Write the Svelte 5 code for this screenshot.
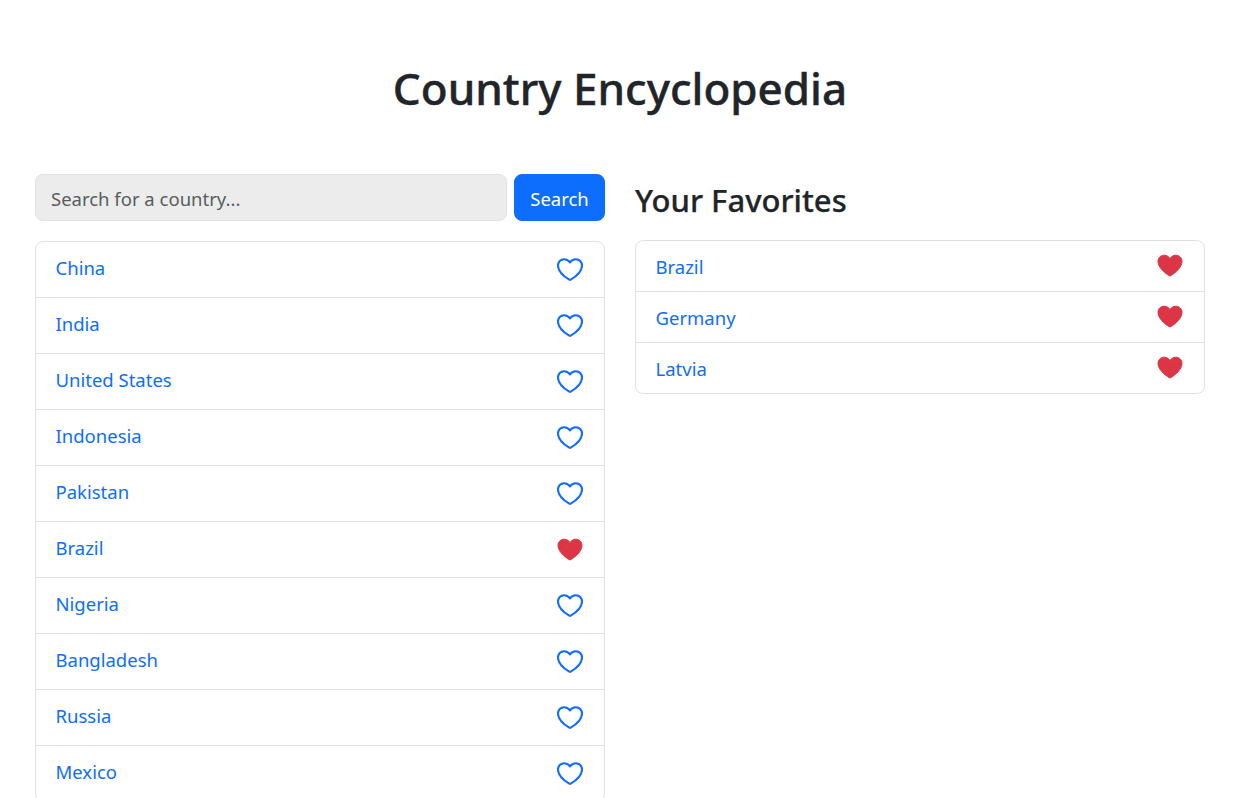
<script lang="ts">
	const countries = [
		{ name: 'China', favorite: false },
		{ name: 'India', favorite: false },
		{ name: 'United States', favorite: false },
		{ name: 'Indonesia', favorite: false },
		{ name: 'Pakistan', favorite: false },
		{ name: 'Brazil', favorite: true },
		{ name: 'Nigeria', favorite: false },
		{ name: 'Bangladesh', favorite: false },
		{ name: 'Russia', favorite: false },
		{ name: 'Mexico', favorite: false }
	];
	const favorites = ['Brazil', 'Germany', 'Latvia'];
</script>

{#snippet heart(filled: boolean)}
	<svg class={filled ? 'heart filled' : 'heart'} viewBox="0 0 26 23" aria-hidden="true">
		<path d="M13 4.500C11.600 2.400 9.600 1.200 7.200 1.200 3.600 1.200 1 4 1 7.500c0 5.500 6 11 11.300 14.200.5.300.9.300 1.400 0C19 18.500 25 13 25 7.500c0-3.500-2.600-6.300-6.200-6.300-2.400 0-4.400 1.200-5.800 3.300z" />
	</svg>
{/snippet}

<main class="page">
	<h1>Country Encyclopedia</h1>
	<div class="columns">
		<section>
			<form class="search">
				<input type="text" placeholder="Search for a country..." />
				<button type="button">Search</button>
			</form>
			<ul class="list">
				{#each countries as country}
					<li class="row">
						<a href="#top">{country.name}</a>
						{@render heart(country.favorite)}
					</li>
				{/each}
			</ul>
		</section>
		<section>
			<h2>Your Favorites</h2>
			<ul class="list compact">
				{#each favorites as name}
					<li class="row">
						<a href="#top">{name}</a>
						{@render heart(true)}
					</li>
				{/each}
			</ul>
		</section>
	</div>
</main>

<style>
	:global(html),
	:global(body) {
		overflow: hidden;
		height: 798px;
		background: #fff;
	}
	.page {
		width: 1170px;
		margin-left: 35px;
		font-family: 'Noto Sans', 'Open Sans', sans-serif;
		font-size: 18.5px;
		line-height: 1.5;
		color: #212529;
	}
	h1 {
		margin: 0;
		padding: 62px 0 59px;
		text-align: center;
		font-size: 44px;
		font-weight: 500;
		-webkit-text-stroke: 0.4px #212529;
		line-height: 1.2;
		height: 174px;
		box-sizing: border-box;
	}
	.columns {
		display: grid;
		grid-template-columns: 570px 570px;
		gap: 30px;
	}
	h2 {
		margin: 0;
		padding: 7px 0 12px;
		font-size: 31px;
		font-weight: 500;
		-webkit-text-stroke: 0.25px #212529;
		line-height: 1.25;
		height: 66px;
		box-sizing: border-box;
	}
	.search {
		display: flex;
		gap: 7px;
		margin-bottom: 20px;
	}
	input {
		flex: 1;
		min-width: 0;
		box-sizing: border-box;
		height: 47px;
		padding: 1px 15px 0;
		border: 1px solid #dee2e6;
		border-radius: 8px;
		background: #ececec;
		font: inherit;
		color: #212529;
	}
	input::placeholder {
		color: #595c5f;
		opacity: 1;
	}
	button {
		height: 47px;
		width: 91px;
		padding: 3px 0 0;
		border: 1px solid #0d6efd;
		border-radius: 8px;
		background: #0d6efd;
		color: #fff;
		font: inherit;
	}
	.list {
		margin: 0;
		padding: 0;
		list-style: none;
		border: 1px solid #dee2e6;
		border-radius: 8px;
	}
	.row {
		display: flex;
		align-items: center;
		justify-content: space-between;
		box-sizing: border-box;
		height: 56px;
		padding: 0 21.5px 0 19.5px;
		border-top: 1px solid #dee2e6;
	}
	.row:first-child {
		border-top: 0;
		height: 55px;
	}
	.compact .row {
		height: 51px;
	}
	.compact .row:first-child {
		height: 50px;
	}
	a {
		color: #0d6efd;
		text-decoration: none;
		margin-top: -3px;
	}
	.compact a {
		margin-top: 2px;
	}
	.heart {
		width: 26px;
		height: 23px;
		flex: none;
		fill: none;
		stroke: #0d6efd;
		stroke-width: 2.1;
		stroke-linejoin: round;
	}
	.heart.filled {
		fill: #dc3545;
		stroke: #dc3545;
		stroke-width: 1;
	}
	.compact .heart {
		margin-top: -1px;
	}
</style>
